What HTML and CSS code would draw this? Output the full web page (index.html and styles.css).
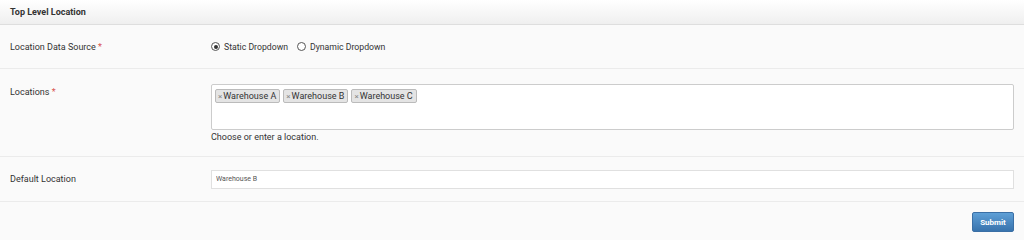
FILE: index.html
```html
<!DOCTYPE html>
<html lang="en">
<head>
    <meta charset="UTF-8">
    <title>Top Level Location</title>
    <link rel="stylesheet" href="styles.css">
</head>
<body>
    <div class="panel">
        <div class="panelHeader">Top Level Location</div>
        <div class="formRow rowSource">
            <label class="rowLabel">Location Data Source <span class="req">*</span></label>
            <div class="rowField radios">
                <label class="radio"><span class="dot checked"></span>Static Dropdown</label>
                <label class="radio"><span class="dot"></span>Dynamic Dropdown</label>
            </div>
        </div>
        <div class="formRow rowLocations">
            <label class="rowLabel">Locations <span class="req">*</span></label>
            <div class="rowField">
                <div class="tagBox">
                    <span class="tag"><span class="tagX">×</span>Warehouse A</span>
                    <span class="tag"><span class="tagX">×</span>Warehouse B</span>
                    <span class="tag"><span class="tagX">×</span>Warehouse C</span>
                </div>
                <div class="help">Choose or enter a location.</div>
            </div>
        </div>
        <div class="formRow rowDefault">
            <label class="rowLabel">Default Location</label>
            <div class="rowField">
                <input class="textInput" type="text" value="Warehouse B">
            </div>
        </div>
        <div class="panelFooter">
            <button class="submitBtn">Submit</button>
        </div>
    </div>
</body>
</html>
```

FILE: styles.css
```css
body {
    margin: 0;
    padding: 0;
    background-color: #fafafa;
    color: #333;
    font-family: Roboto, "Liberation Sans", sans-serif;
    font-size: 9px;
}
.panel {
    display: flex;
    flex-direction: column;
}
.panelHeader {
    height: 25px;
    box-sizing: border-box;
    padding: 0 10px;
    display: flex;
    align-items: center;
    font-weight: bold;
    color: #333;
    background: linear-gradient(#ffffff, #efefef);
    border-bottom: 1px solid #dedede;
}
.formRow {
    display: flex;
    box-sizing: border-box;
    border-bottom: 1px solid #ebebeb;
    padding: 0 10px;
}
.rowLabel {
    width: 201px;
    flex-shrink: 0;
    color: #333;
}
.req {
    color: #d9534f;
}
.rowField {
    flex: 1;
}
.rowSource {
    height: 44px;
    align-items: center;
}
.radios {
    display: flex;
    align-items: center;
    gap: 9px;
    font-size: 8.7px;
}
.radio {
    display: flex;
    align-items: center;
    gap: 4px;
}
.dot {
    width: 7px;
    height: 7px;
    border: 1px solid #555;
    border-radius: 50%;
    background: #fff;
    position: relative;
}
.dot.checked::after {
    content: "";
    position: absolute;
    left: 1.5px;
    top: 1.5px;
    width: 4px;
    height: 4px;
    border-radius: 50%;
    background: #333;
}
.rowLocations {
    height: 88px;
    padding-top: 15px;
}
.rowLocations .rowLabel {
    padding-top: 3px;
}
.tagBox {
    height: 46px;
    box-sizing: border-box;
    background: #fff;
    border: 1px solid #ccc;
    border-radius: 2px;
    padding: 4px 3px;
    display: flex;
    align-items: flex-start;
    gap: 3px;
}
.tag {
    display: inline-flex;
    align-items: center;
    height: 14px;
    box-sizing: border-box;
    padding: 0 3px 0 2px;
    background: #e4e4e4;
    border: 1px solid #bbb;
    border-radius: 2px;
    font-size: 9px;
    color: #333;
}
.tagX {
    color: #888;
    font-size: 8px;
    margin-right: 1px;
}
.help {
    margin-top: 2px;
    color: #333;
}
.rowDefault {
    height: 45px;
    align-items: center;
}
.textInput {
    display: block;
    width: 100%;
    height: 19px;
    box-sizing: border-box;
    border: 1px solid #e0e0e0;
    background: #fff;
    padding: 0 4px;
    font-family: Roboto, "Liberation Sans", sans-serif;
    font-size: 7px;
    color: #555;
}
.panelFooter {
    display: flex;
    justify-content: flex-end;
    padding: 10px 10px;
}
.submitBtn {
    width: 42px;
    height: 20px;
    border: 1px solid #3a6fa5;
    border-radius: 2px;
    background: linear-gradient(#5e9fd6, #3873ad);
    color: #fff;
    font-family: Roboto, "Liberation Sans", sans-serif;
    font-size: 8px;
    font-weight: bold;
    padding: 0;
}
```
